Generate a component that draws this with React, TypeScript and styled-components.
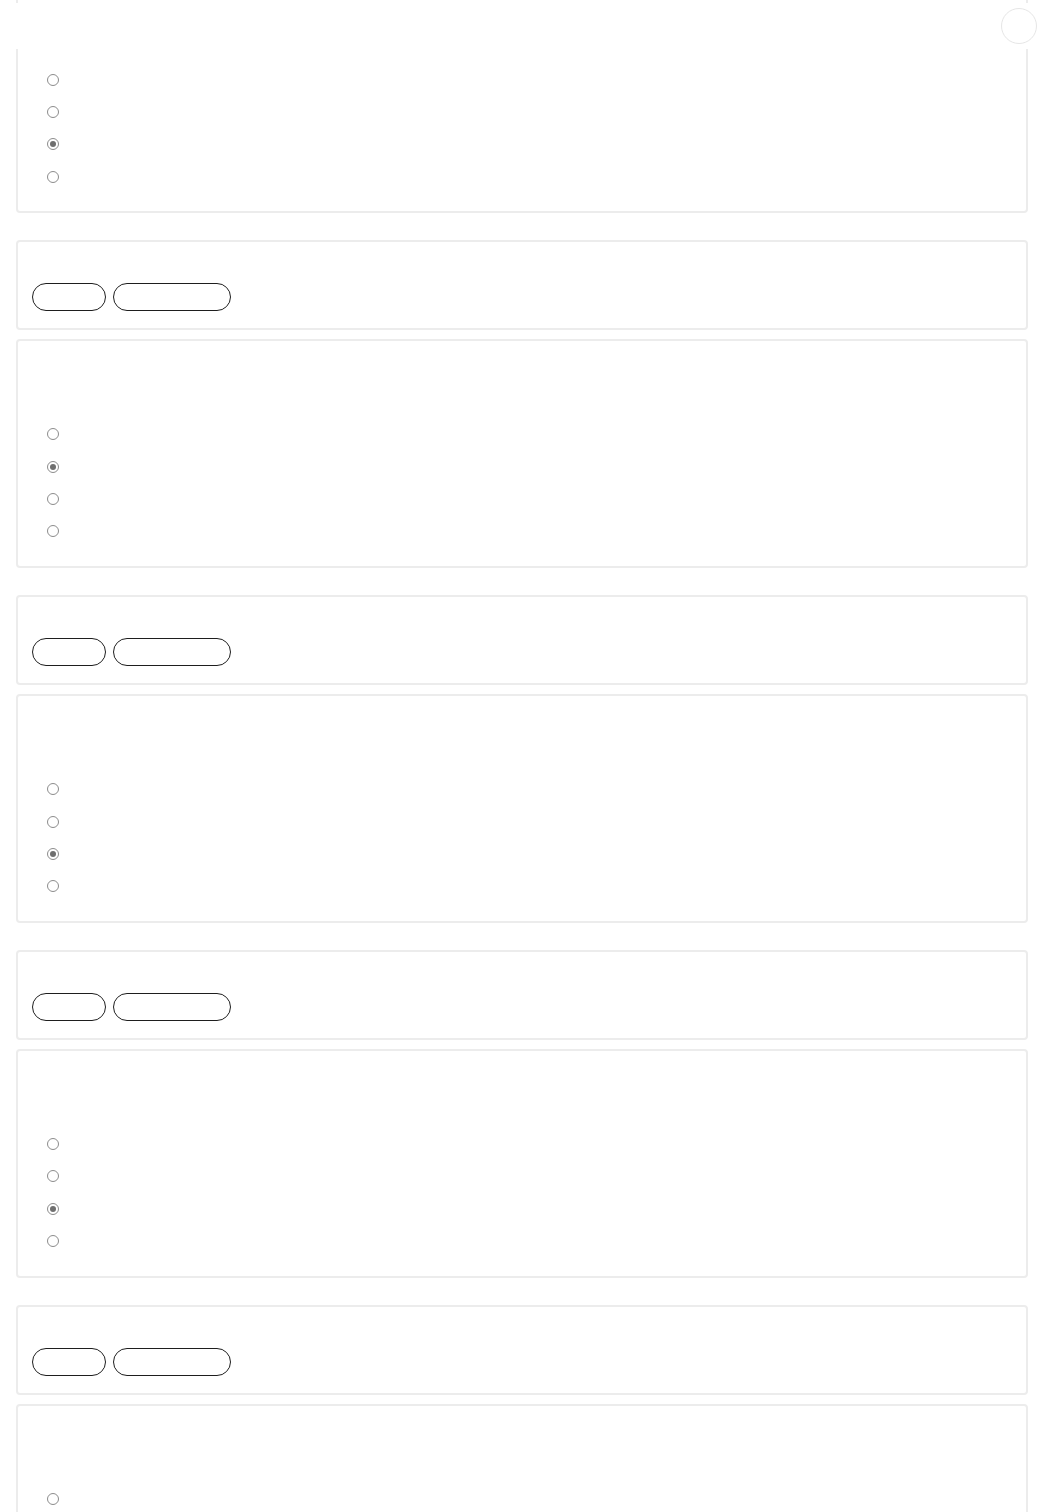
import styled, { createGlobalStyle } from 'styled-components';

const GlobalStyle = createGlobalStyle`
  html, body {
    margin: 0;
    padding: 0;
    background: #ffffff;
    font-family: "Liberation Sans", Arial, sans-serif;
  }
`;

const TopBar = styled.div`
  position: fixed;
  top: 3px;
  left: 0;
  right: 0;
  height: 46px;
  background: #ffffff;
  z-index: 10;
`;

const RoundButton = styled.button`
  position: absolute;
  top: 5px;
  right: 7px;
  width: 36px;
  height: 36px;
  padding: 0;
  border-radius: 50%;
  border: 1px solid #e6e6e6;
  background: #ffffff;
`;

const Page = styled.main`
  display: flex;
  flex-direction: column;
  padding: 0 16px;
  margin-top: -15.5px;
`;

const Section = styled.section`
  display: flex;
  flex-direction: column;
  gap: 9px;
  margin-bottom: 27px;
`;

const Card = styled.div`
  border: 2px solid #ececec;
  border-radius: 4px;
  background: #ffffff;
  padding: 0 14px;
`;

const HeaderCard = styled(Card)`
  padding-top: 41px;
  padding-bottom: 17px;
`;

const PillRow = styled.div`
  display: flex;
  gap: 7px;
`;

const Pill = styled.button<{ $w: number }>`
  width: ${(p) => p.$w}px;
  height: 28px;
  padding: 0;
  border: 1px solid #1e1e1e;
  border-radius: 14px;
  background: #ffffff;
`;

const QuestionCard = styled(Card)`
  padding-top: 16px;
  padding-bottom: 18.6px;
`;

const QuestionHead = styled.div`
  height: 61px;
`;

const Options = styled.ul`
  list-style: none;
  margin: 0;
  padding: 0 0 0 15px;
`;

const Option = styled.li`
  height: 32.3px;
  display: flex;
  align-items: center;
`;

const Radio = styled.span<{ $checked: boolean }>`
  box-sizing: border-box;
  width: 12px;
  height: 12px;
  border-radius: 50%;
  border: 1px solid #8c8c8c;
  background: #ffffff;
  display: flex;
  align-items: center;
  justify-content: center;

  &::after {
    content: '';
    width: 6px;
    height: 6px;
    border-radius: 50%;
    background: ${(p) => (p.$checked ? '#6f6f6f' : 'transparent')};
  }
`;

const questions = [2, 1, 2, 2, 0];

const Question = ({ checked }: { checked: number }) => (
  <QuestionCard>
    <QuestionHead />
    <Options>
      {[0, 1, 2, 3].map((i) => (
        <Option key={i}>
          <Radio $checked={i === checked} />
        </Option>
      ))}
    </Options>
  </QuestionCard>
);

export default function App() {
  return (
    <>
      <GlobalStyle />
      <TopBar>
        <RoundButton aria-label="menu" />
      </TopBar>
      <Page>
        <Section>
          <Question checked={questions[0]} />
        </Section>
        {questions.slice(1).map((c, i) => (
          <Section key={i}>
            <HeaderCard>
              <PillRow>
                <Pill $w={74} />
                <Pill $w={118} />
              </PillRow>
            </HeaderCard>
            <Question checked={c === 0 ? -1 : c} />
          </Section>
        ))}
      </Page>
    </>
  );
}
